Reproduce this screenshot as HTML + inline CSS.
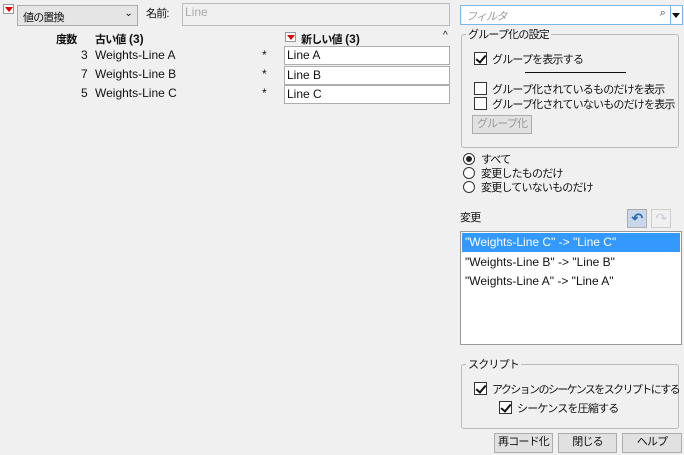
<!DOCTYPE html>
<html><head><meta charset="utf-8"><style>
*{box-sizing:border-box;margin:0;padding:0}
body{width:684px;height:455px;background:#f0f0f0;font-family:"Liberation Sans","Noto Sans CJK JP",sans-serif;font-size:12px;color:#111;position:relative;overflow:hidden}
.a{position:absolute;white-space:nowrap}
.j{font-size:11px;letter-spacing:-0.8px}
.rt{position:absolute;width:11px;height:10px;border:1px solid #999;background:#fff}
.rt:after{content:"";position:absolute;left:1px;top:2px;border-left:4px solid transparent;border-right:4px solid transparent;border-top:5px solid #d00}
.inp{position:absolute;background:#fff;border:1px solid #adadad}
.cb{position:absolute;width:13px;height:13px;border:1px solid #333;background:#fff}
.cb.on:after{content:"";position:absolute;left:3px;top:0px;width:4px;height:8px;border:solid #111;border-width:0 2px 2px 0;transform:rotate(40deg)}
.rd{position:absolute;width:12px;height:12px;border:1px solid #333;border-radius:50%;background:#fff}
.rd.on:after{content:"";position:absolute;left:2px;top:2px;width:6px;height:6px;border-radius:50%;background:#222}
.grp{position:absolute;border:1px solid #bbb;border-radius:3px}
.btn{position:absolute;border:1px solid #adadad;background:#e1e1e1;text-align:center;line-height:17px;white-space:nowrap;font-size:11px;letter-spacing:-0.8px}
</style></head><body>
<div class="rt" style="left:3px;top:4px"></div>
<div class="a j" style="left:17px;top:5px;width:121px;height:21px;border:1px solid #adadad;background:#e5e5e5;padding:3px 0 0 5px">値の置換<span style="position:absolute;right:5px;top:2px;font-size:10px">⌄</span></div>
<div class="a j" style="left:146px;top:5px">名前:</div>
<div class="inp" style="left:182px;top:3px;width:268px;height:23px;border-color:#bbb;background:#f0f0f0;color:#aaa;padding:1px 2px">Line</div>
<div class="a j" style="left:56px;top:31px;font-weight:bold">度数</div>
<div class="a" style="left:95px;top:31px;font-weight:bold"><span class="j">古い値</span> (3)</div>
<div class="rt" style="left:285px;top:32px"></div>
<div class="a" style="left:301px;top:31px;font-weight:bold"><span class="j">新しい値</span> (3)</div>
<div class="a" style="left:443px;top:30px;font-size:10px">^</div>
<div class="a" style="left:81px;top:48px">3</div><div class="a" style="left:95px;top:48px">Weights-Line A</div><div class="a" style="left:262px;top:48px">*</div>
<div class="a" style="left:81px;top:67px">7</div><div class="a" style="left:95px;top:67px">Weights-Line B</div><div class="a" style="left:262px;top:67px">*</div>
<div class="a" style="left:81px;top:86px">5</div><div class="a" style="left:95px;top:86px">Weights-Line C</div><div class="a" style="left:262px;top:86px">*</div>
<div class="inp" style="left:284px;top:46px;width:166px;height:19px;padding:1px 2px">Line A</div>
<div class="inp" style="left:284px;top:66px;width:166px;height:19px;padding:1px 2px">Line B</div>
<div class="inp" style="left:284px;top:85px;width:166px;height:19px;padding:1px 2px">Line C</div>

<div class="inp j" style="left:460px;top:5px;width:211px;height:20px;border-color:#7ab8e8;color:#999;font-style:italic;padding:2px 5px">フィルタ<span style="position:absolute;right:5px;top:1px;font-style:normal;color:#333;font-size:11px">⌕</span></div>
<div class="inp" style="left:670px;top:5px;width:13px;height:20px;border-color:#7ab8e8"><span style="position:absolute;left:1px;top:7px;border-left:4px solid transparent;border-right:4px solid transparent;border-top:5px solid #111"></span></div>

<div class="grp" style="left:461px;top:34px;width:218px;height:114px"></div>
<div class="a j" style="left:466px;top:26px;background:#f0f0f0;padding:0 2px">グループ化の設定</div>
<div class="cb on" style="left:474px;top:52px"></div><div class="a j" style="left:492px;top:51px">グループを表示する</div>
<div class="a" style="left:525px;top:72px;width:101px;height:1px;background:#111"></div>
<div class="cb" style="left:474px;top:82px"></div><div class="a j" style="left:492px;top:81px">グループ化されているものだけを表示</div>
<div class="cb" style="left:474px;top:97px"></div><div class="a j" style="left:492px;top:96px">グループ化されていないものだけを表示</div>
<div class="btn" style="left:472px;top:115px;width:60px;height:19px;color:#999">グループ化</div>

<div class="rd on" style="left:463px;top:153px"></div><div class="a j" style="left:481px;top:151px">すべて</div>
<div class="rd" style="left:463px;top:167px"></div><div class="a j" style="left:481px;top:165px">変更したものだけ</div>
<div class="rd" style="left:463px;top:181px"></div><div class="a j" style="left:481px;top:179px">変更していないものだけ</div>

<div class="a j" style="left:460px;top:209px">変更</div>
<div class="btn" style="left:627px;top:209px;width:20px;height:19px;background:#c8d8ea;color:#2a6cb0;font-weight:bold;font-size:14px;line-height:16px">↶</div>
<div class="btn" style="left:651px;top:209px;width:20px;height:19px;background:#f0f0f0;border-color:#ccc;color:#ccd;font-size:14px;line-height:16px">↷</div>
<div class="inp" style="left:460px;top:231px;width:222px;height:114px;border-color:#999"></div>
<div class="a" style="left:462px;top:233px;width:218px;height:19px;background:#3399ff;color:#fff;padding:2px 3px">"Weights-Line C" -&gt; "Line C"</div>
<div class="a" style="left:465px;top:255px">"Weights-Line B" -&gt; "Line B"</div>
<div class="a" style="left:465px;top:274px">"Weights-Line A" -&gt; "Line A"</div>

<div class="grp" style="left:461px;top:364px;width:218px;height:65px"></div>
<div class="a j" style="left:466px;top:356px;background:#f0f0f0;padding:0 2px">スクリプト</div>
<div class="cb on" style="left:474px;top:382px"></div><div class="a j" style="left:492px;top:381px;letter-spacing:-1.6px">アクションのシーケンスをスクリプトにする</div>
<div class="cb on" style="left:499px;top:401px"></div><div class="a j" style="left:517px;top:400px">シーケンスを圧縮する</div>

<div class="btn" style="left:494px;top:433px;width:59px;height:20px">再コード化</div>
<div class="btn" style="left:558px;top:433px;width:59px;height:20px">閉じる</div>
<div class="btn" style="left:622px;top:433px;width:60px;height:20px">ヘルプ</div>
</body></html>
